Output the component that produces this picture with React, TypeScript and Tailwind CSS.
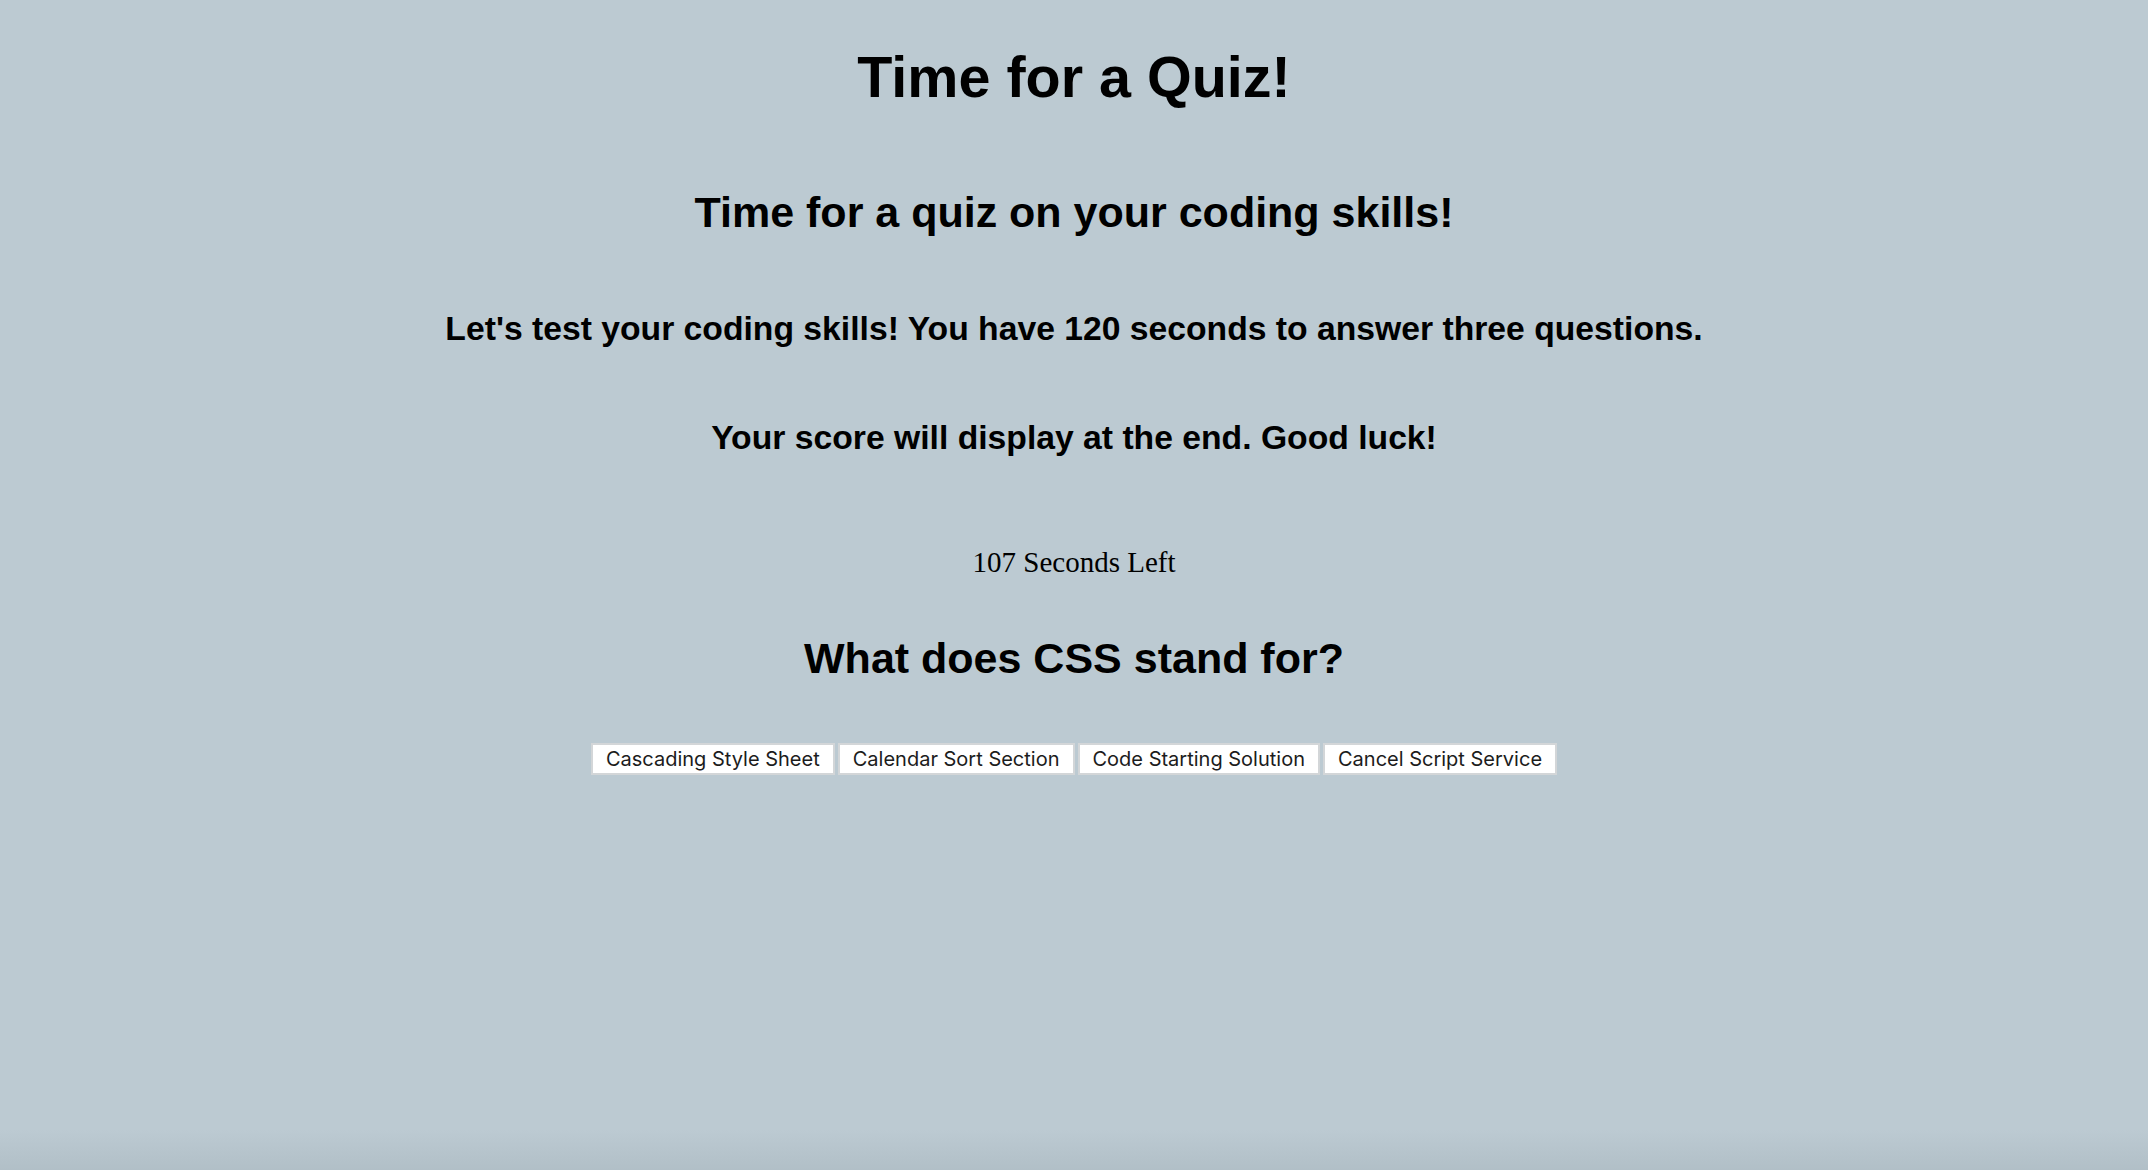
const answers = ["Cascading Style Sheet", "Calendar Sort Section", "Code Starting Solution", "Cancel Script Service"];

export default function App() {
  return (
    <div className="min-h-screen flex flex-col bg-[#bccad2] text-black text-center font-['Liberation_Sans',Arial,sans-serif]">
      <header className="pt-[43px]">
        <h1 className="text-[57.5px] leading-[68px] font-bold">Time for a Quiz!</h1>
      </header>

      <main className="flex flex-col items-center">
        <h2 className="mt-[75px] text-[43px] leading-[52px] font-bold">Time for a quiz on your coding skills!</h2>
        <h3 className="mt-[70px] text-[33.7px] leading-[40px] font-bold">
          Let's test your coding skills! You have 120 seconds to answer three questions.
        </h3>
        <h3 className="mt-[69px] text-[33.7px] leading-[40px] font-bold">Your score will display at the end. Good luck!</h3>

        <div className="mt-[88px] text-[29px] leading-[34px] font-['Liberation_Serif','Times_New_Roman',serif]">
          107 Seconds Left
        </div>

        <h2 className="mt-[53px] text-[43px] leading-[52px] font-bold">What does CSS stand for?</h2>

        <div className="mt-[59px] flex gap-[3px]">
          {answers.map((answer) => (
            <button
              key={answer}
              className="h-[32px] px-[13px] bg-white border-2 border-[#d3d6d8] text-[20px] leading-none text-[#1c1c1c] font-['Inter',sans-serif]"
            >
              {answer}
            </button>
          ))}
        </div>
      </main>

      <div className="mt-auto h-[40px] bg-gradient-to-b from-[#bccad2] to-[#b1bfc7]" />
    </div>
  );
}
